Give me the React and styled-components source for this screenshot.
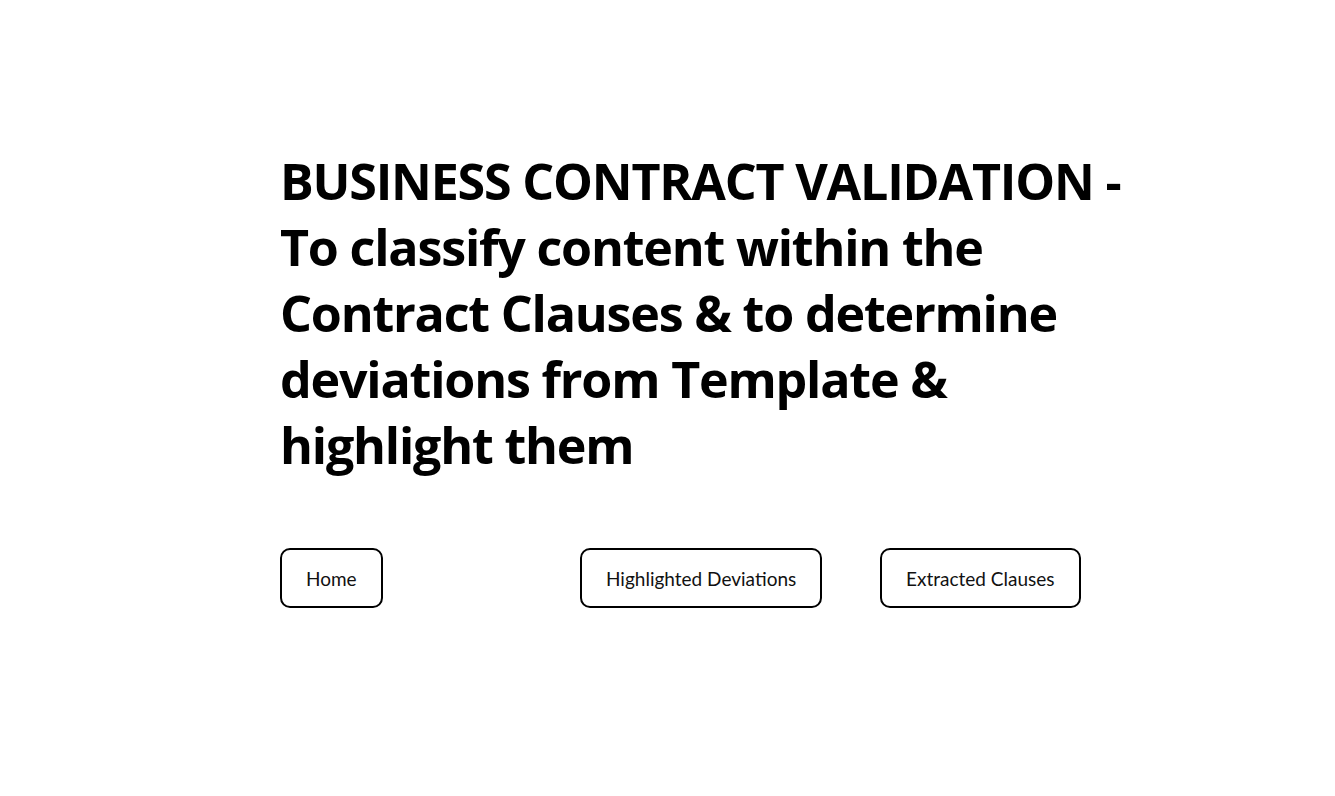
import React from 'react';
import styled, { createGlobalStyle } from 'styled-components';

const GlobalStyle = createGlobalStyle`
	html, body {
		margin: 0;
		padding: 0;
		background: #ffffff;
	}
	body {
		font-family: 'Lato', 'Noto Sans', sans-serif;
		color: #000000;
	}
`;

const Page = styled.main`
	width: 100%;
	min-height: 796px;
	display: flex;
	justify-content: flex-start;
	padding: 148px 0 0 280px;
	box-sizing: border-box;
`;

const Block = styled.div`
	width: 884px;
	display: flex;
	flex-direction: column;
`;

const Title = styled.h1`
	margin: 0;
	font-family: 'Open Sans', sans-serif;
	font-weight: 700;
	font-size: 50.2px;
	line-height: 66px;
	letter-spacing: -1.2px;
	white-space: nowrap;
`;

const Columns = styled.div`
	display: grid;
	grid-template-columns: repeat(3, 284px);
	column-gap: 16px;
	margin-top: 70px;
`;

const Column = styled.div`
	display: flex;
	align-items: flex-start;
`;

const NavButton = styled.button`
	height: 60px;
	padding: 0 24px;
	border: 2px solid #000000;
	border-radius: 10px;
	background: #ffffff;
	font-family: 'Lato', sans-serif;
	font-size: 19px;
	color: #111111;
	cursor: pointer;
`;

const lines = [
	'BUSINESS CONTRACT VALIDATION -',
	'To classify content within the',
	'Contract Clauses & to determine',
	'deviations from Template &',
	'highlight them',
];

const App = () => (
	<>
		<GlobalStyle />
		<Page>
			<Block>
				<Title>
					{lines.map((line, i) => (
						<React.Fragment key={line}>
							{line}
							{i < lines.length - 1 && <br />}
						</React.Fragment>
					))}
				</Title>
				<Columns>
					<Column>
						<NavButton>Home</NavButton>
					</Column>
					<Column>
						<NavButton>Highlighted Deviations</NavButton>
					</Column>
					<Column>
						<NavButton>Extracted Clauses</NavButton>
					</Column>
				</Columns>
			</Block>
		</Page>
	</>
);

export default App;
